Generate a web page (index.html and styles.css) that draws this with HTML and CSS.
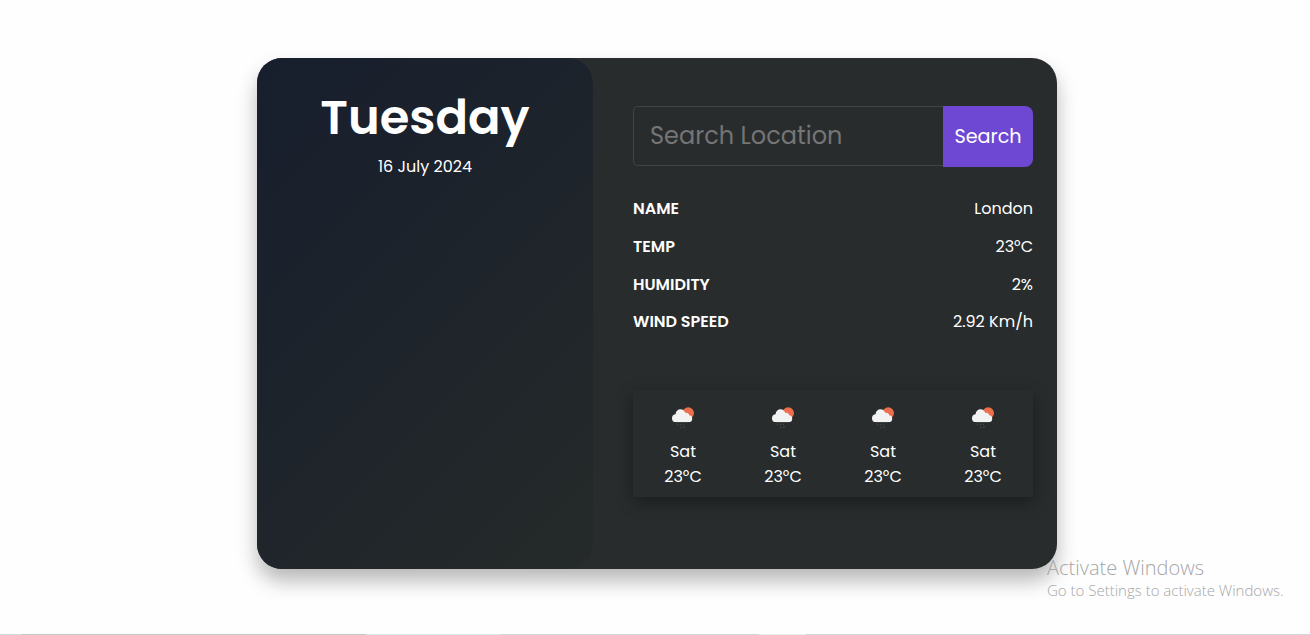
FILE: index.html
```html
<!DOCTYPE html>
<html lang="en">
<head>
<meta charset="utf-8">
<title>Weather</title>
<link rel="stylesheet" href="styles.css">
</head>
<body>
<svg class="defs" aria-hidden="true">
  <symbol id="rain" viewBox="0 0 24 24">
    <circle cx="17.200" cy="8.100" r="5.800" fill="#ec6e4c"/>
    <g fill="#f2f2f2">
      <circle cx="4.900" cy="13.200" r="3.900"/>
      <circle cx="9.500" cy="9.200" r="4.900"/>
      <circle cx="14.800" cy="11.400" r="3.600"/>
      <circle cx="17.800" cy="13.700" r="3.400"/>
      <path d="M4.900 10H17.800V17.100H4.900z"/>
    </g>
    <path d="M6.500 18.800l-.3 1.500M9.500 18.800l-.3 1.500M12.500 18.500l-.4 1.500M10 21.800l-.3 1.500M13.200 21l-.4 2" stroke="#4b4f50" stroke-width=".9" fill="none"/>
  </symbol>
</svg>
<main class="card">
  <section class="today">
    <h1 class="day">Tuesday</h1>
    <p class="date">16 July 2024</p>
  </section>
  <section class="details">
    <form class="search">
      <input class="search-input" type="text" placeholder="Search Location">
      <button class="search-button" type="button">Search</button>
    </form>
    <dl class="stats">
      <div class="stat"><dt>NAME</dt><dd>London</dd></div>
      <div class="stat"><dt>TEMP</dt><dd>23°C</dd></div>
      <div class="stat"><dt>HUMIDITY</dt><dd>2%</dd></div>
      <div class="stat"><dt>WIND SPEED</dt><dd>2.92 Km/h</dd></div>
    </dl>
    <ul class="forecast">
      <li><svg class="icon"><use href="#rain"/></svg><span>Sat</span><span>23°C</span></li>
      <li><svg class="icon"><use href="#rain"/></svg><span>Sat</span><span>23°C</span></li>
      <li><svg class="icon"><use href="#rain"/></svg><span>Sat</span><span>23°C</span></li>
      <li><svg class="icon"><use href="#rain"/></svg><span>Sat</span><span>23°C</span></li>
    </ul>
  </section>
</main>
<aside class="watermark">
  <p class="wm-title">Activate Windows</p>
  <p class="wm-text">Go to Settings to activate Windows.</p>
</aside>
<div class="edge"></div>
</body>
</html>
```
FILE: styles.css
```css
* { box-sizing: border-box; margin: 0; padding: 0; }
body {
  height: 635px;
  padding: 58px 0 0 257px;
  overflow: hidden;
  background: #fefefe;
  color: #fff;
  font: 400 16px/24px Poppins, Inter, sans-serif;
}
.defs { position: absolute; width: 0; height: 0; }
.card {
  display: flex;
  width: 800px;
  height: 511px;
  border-radius: 25px;
  background: #282c2d;
  box-shadow: 0 12px 20px rgba(0, 0, 0, .28);
}
.today {
  width: 336px;
  padding-top: 24px;
  border-radius: 25px;
  background: linear-gradient(135deg, #171e2d 0%, #252a29 100%);
  text-align: center;
}
.day { font-size: 48px; font-weight: 600; line-height: 72px; }
.date { line-height: 26px; }
.details { width: 464px; padding: 48px 24px 0 40px; }
.search { display: flex; align-items: flex-start; height: 61px; }
.search-input {
  width: 310px;
  height: 60px;
  padding: 0 16px 1px;
  border: 1px solid #3c4648;
  border-right: 0;
  border-radius: 5px 0 0 5px;
  background: transparent;
  font: 400 24px Poppins, Inter, sans-serif;
}
.search-input::placeholder { color: #757575; }
.search-button {
  width: 90px;
  height: 61px;
  padding-bottom: 1px;
  border: 0;
  border-radius: 0 8px 8px 0;
  background: #6e48d2;
  color: #fff;
  font: 400 19.2px Poppins, Inter, sans-serif;
}
.stats { padding-top: 29px; }
.stat { display: flex; justify-content: space-between; height: 37.8px; line-height: 26px; }
.stat dt { font-weight: 600; }
.forecast {
  display: flex;
  height: 107px;
  margin-top: 42.8px;
  list-style: none;
  box-shadow: 0 5px 15px rgba(0, 0, 0, .35);
}
.forecast li {
  display: flex;
  flex-direction: column;
  align-items: center;
  width: 100px;
  padding-top: 15px;
  line-height: 25px;
}
.icon { width: 24px; height: 24px; margin-bottom: 10px; }
.watermark {
  position: absolute;
  left: 1047px;
  top: 555px;
  color: #a6a6a6;
  font-family: "Segoe UI", "Open Sans", sans-serif;
  font-weight: 300;
  white-space: nowrap;
}
.wm-title { font-size: 20px; line-height: 26px; }
.wm-text { font-size: 15px; line-height: 18px; }
.edge {
  position: absolute;
  left: 0;
  bottom: 0;
  width: 100%;
  height: 1px;
  background: linear-gradient(90deg, #cfdcdc 22px, #c4c7c4 22px 366px, #dde8ea 366px 500px, #d0d6dc 500px 759px, #e8eeee 759px 806px, #cdd7da 806px);
}
```
